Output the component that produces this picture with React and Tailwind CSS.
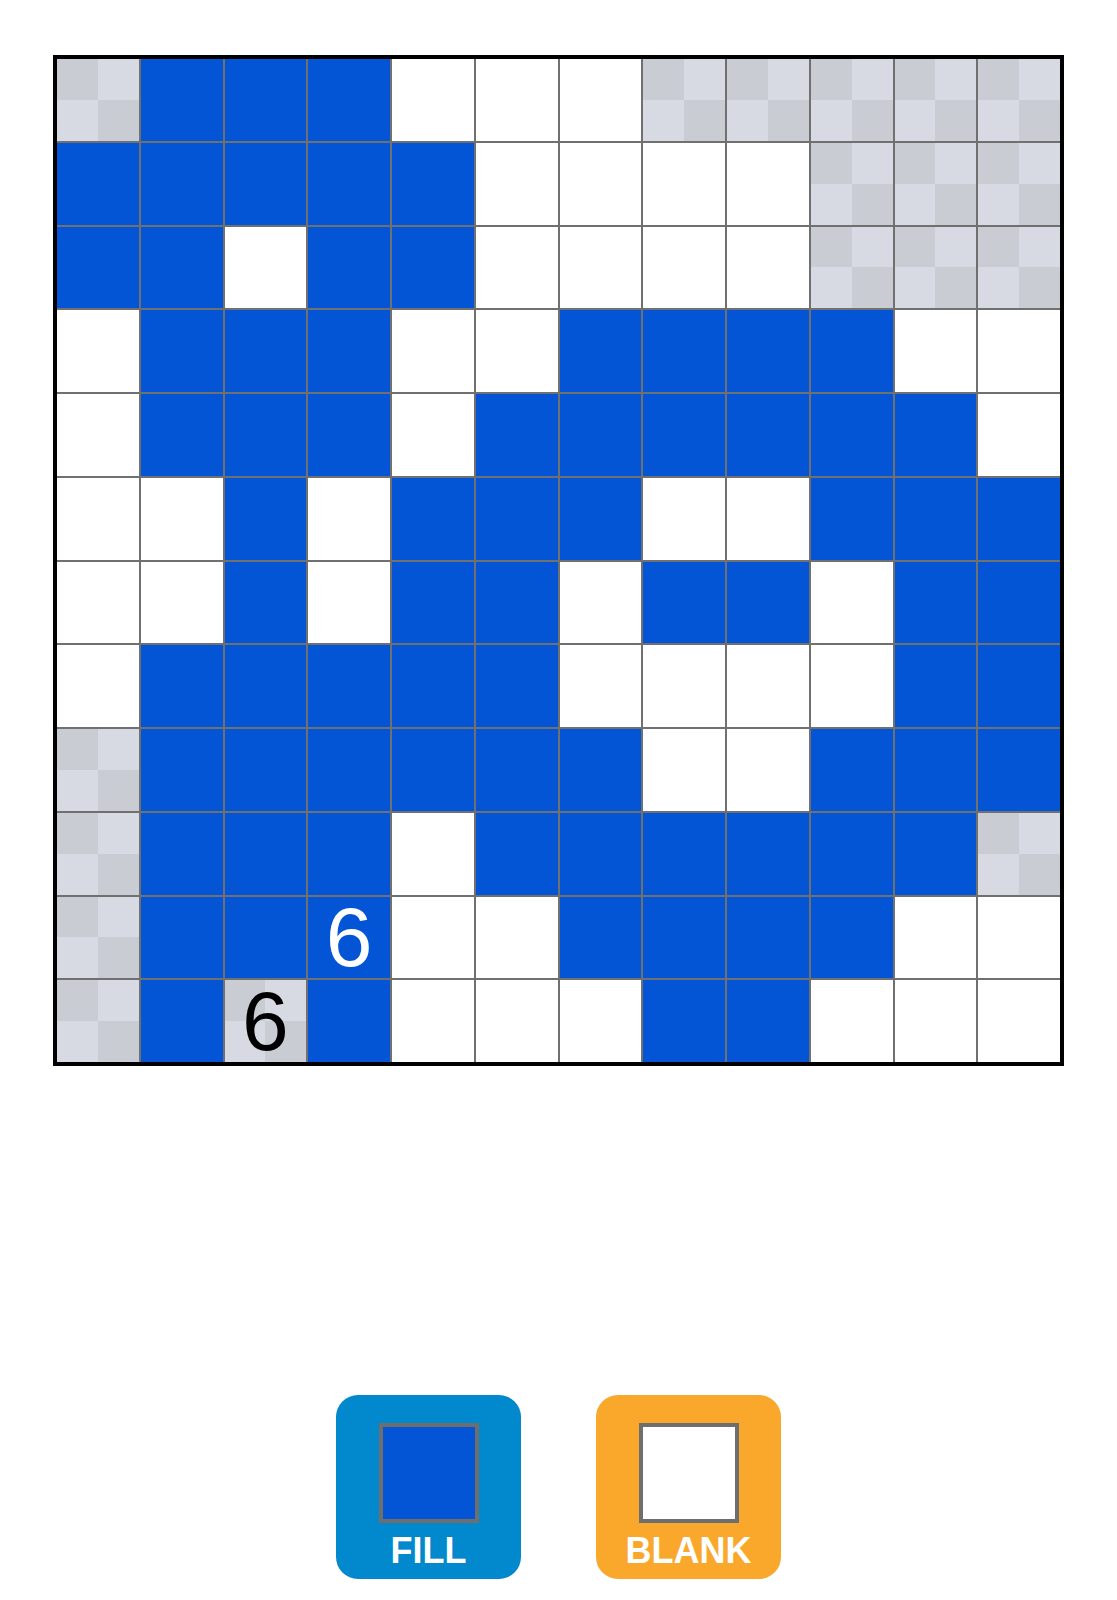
const board = [
  "GBBBWWWGGGGG",
  "BBBBBWWWWGGG",
  "BBWBBWWWWGGG",
  "WBBBWWBBBBWW",
  "WBBBWBBBBBBW",
  "WWBWBBBWWBBB",
  "WWBWBBWBBWBB",
  "WBBBBBWWWWBB",
  "GBBBBBBWWBBB",
  "GBBBWBBBBBBG",
  "GBBBWWBBBBWW",
  "GBGBWWWBBWWW",
];

// cells that show a number
const clues = {
  "10-3": "text-white",
  "11-2": "text-black",
};

function Cell({ type, clue }) {
  return (
    <div
      className={`relative aspect-square ${
        type === "B" ? "bg-[#0455d6]" : type === "W" ? "bg-white" : ""
      }`}
    >
      {type === "G" && (
        <div className="absolute inset-0 grid grid-cols-2 grid-rows-2">
          <div className="bg-[#c9ccd3]" />
          <div className="bg-[#d7dae2]" />
          <div className="bg-[#d7dae2]" />
          <div className="bg-[#c9ccd3]" />
        </div>
      )}
      {clue && (
        <span
          className={`absolute inset-0 flex items-center justify-center text-[84px] leading-none ${clue}`}
        >
          6
        </span>
      )}
    </div>
  );
}

export default function App() {
  return (
    <div
      className="min-h-[1600px] bg-white pt-[55px]"
      style={{ fontFamily: '"Liberation Sans", Arial, sans-serif' }}
    >
      <div className="ml-[53px] w-[1011px] border-4 border-black bg-[#707070] grid grid-cols-12 gap-[2px]">
        {board.map((row, r) =>
          row.split("").map((t, c) => (
            <Cell key={r + "-" + c} type={t} clue={clues[r + "-" + c]} />
          ))
        )}
      </div>

      <div className="mt-[329px] flex justify-center gap-[75px]">
        <button className="w-[185px] h-[184px] rounded-[22px] bg-[#0288cc] flex flex-col items-center pt-[28px]">
          <div className="w-[100px] h-[100px] border-4 border-[#6e6e6e] bg-[#0455d6]" />
          <span className="mt-[10px] text-[36px] font-bold leading-none text-white">
            FILL
          </span>
        </button>
        <button className="w-[185px] h-[184px] rounded-[22px] bg-[#f9a82c] flex flex-col items-center pt-[28px]">
          <div className="w-[100px] h-[100px] border-4 border-[#6e6e6e] bg-white" />
          <span className="mt-[10px] text-[36px] font-bold leading-none text-white">
            BLANK
          </span>
        </button>
      </div>
    </div>
  );
}
